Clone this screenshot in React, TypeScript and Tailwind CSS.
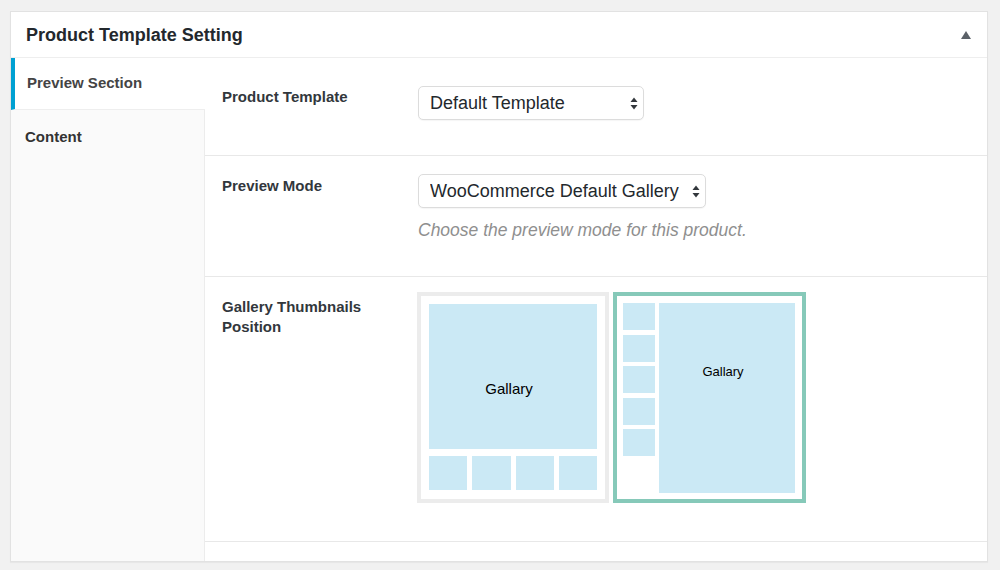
import React, { useState } from "react";

const font = { fontFamily: '"Liberation Sans", Arial, sans-serif' };

function SelectArrows() {
  return (
    <svg width="8" height="13" viewBox="0 0 8 13" className="pointer-events-none absolute right-[6px] top-[11px]">
      <path d="M4 0.5 L7.5 5 L0.5 5 Z" fill="#32373c" />
      <path d="M4 12.5 L7.5 8 L0.5 8 Z" fill="#32373c" />
    </svg>
  );
}

interface FakeSelectProps {
  value: string;
  options: string[];
  width: string;
  onChange: (v: string) => void;
}

function FakeSelect({ value, options, width, onChange }: FakeSelectProps) {
  return (
    <div className={`relative h-[34px] self-start ${width}`}>
      <select
        value={value}
        onChange={(e) => onChange(e.target.value)}
        style={font}
        className="h-[34px] w-full appearance-none rounded-[5px] border border-[#dcdcdc] bg-white pl-[11px] pr-6 text-[18px] text-[#23282d] shadow-[0_1px_1px_rgba(0,0,0,0.04)] outline-none"
      >
        {options.map((o) => (
          <option key={o}>{o}</option>
        ))}
      </select>
      <SelectArrows />
    </div>
  );
}

function BottomThumbs({ active, onClick }: { active: boolean; onClick: () => void }) {
  return (
    <div
      onClick={onClick}
      className={`box-border flex h-[211px] w-[192px] cursor-pointer flex-col border-4 bg-white p-2 ${
        active ? "border-[#86c9b9]" : "border-[#ececec]"
      }`}
    >
      <div className="h-[145px] bg-[#cbe9f5] pr-[8px] pt-[76px] text-center text-[15px] leading-[18px] text-black">Gallary</div>
      <div className="mt-[7px] grid h-[34px] grid-cols-4 gap-[5px]">
        <div className="bg-[#cbe9f5]" />
        <div className="bg-[#cbe9f5]" />
        <div className="bg-[#cbe9f5]" />
        <div className="bg-[#cbe9f5]" />
      </div>
    </div>
  );
}

function LeftThumbs({ active, onClick }: { active: boolean; onClick: () => void }) {
  return (
    <div
      onClick={onClick}
      className={`box-border flex h-[211px] w-[193px] cursor-pointer gap-[4px] border-4 bg-white pb-[6px] pl-[6px] pr-[7px] pt-[7px] ${
        active ? "border-[#86c9b9]" : "border-[#ececec]"
      }`}
    >
      <div className="flex w-[32px] flex-col gap-[4.5px]">
        <div className="h-[27px] bg-[#cbe9f5]" />
        <div className="h-[27px] bg-[#cbe9f5]" />
        <div className="h-[27px] bg-[#cbe9f5]" />
        <div className="h-[27px] bg-[#cbe9f5]" />
        <div className="h-[27px] bg-[#cbe9f5]" />
      </div>
      <div className="flex-1 bg-[#cbe9f5] pr-[8px] pt-[61px] text-center text-[13px] leading-[16px] text-black">Gallary</div>
    </div>
  );
}

export default function App() {
  const [tab, setTab] = useState("preview");
  const [template, setTemplate] = useState("Default Template");
  const [mode, setMode] = useState("WooCommerce Default Gallery");
  const [position, setPosition] = useState("left");

  return (
    <div style={font} className="min-h-[570px] w-[1000px] bg-[#f1f1f1] pl-[10px] pt-[11px]">
      <div className="box-border flex h-[551px] w-[978px] flex-col border border-[#e2e2e2] bg-white shadow-[0_1px_1px_rgba(0,0,0,0.04)]">
        {/* header */}
        <div className="flex h-[46px] shrink-0 items-center justify-between border-b border-[#eeeeee] pl-[15px] pr-[16px] pt-[1px]">
          <h2 className="text-[18px] font-bold text-[#23282d]">Product Template Setting</h2>
          <svg width="10" height="8" viewBox="0 0 10 8">
            <path d="M5 0 L10 8 L0 8 Z" fill="#5b6168" />
          </svg>
        </div>

        <div className="flex flex-1">
          {/* tabs */}
          <div className="w-[194px] shrink-0 border-r border-[#ececec] bg-[#fafafa]">
            <button
              onClick={() => setTab("preview")}
              className={`relative z-10 -mr-px box-border flex h-[52px] w-[calc(100%+1px)] items-center border-b border-[#eeeeee] text-left text-[15px] font-bold ${
                tab === "preview"
                  ? "border-l-4 border-l-[#00a0d2] bg-white pl-[12px] text-[#444]"
                  : "pl-[14px] text-[#333]"
              }`}
            >
              Preview Section
            </button>
            <button
              onClick={() => setTab("content")}
              className={`relative z-10 -mr-px box-border flex h-[55px] w-[calc(100%+1px)] items-center text-left text-[15px] font-bold ${
                tab === "content"
                  ? "border-l-4 border-l-[#00a0d2] bg-white pl-[12px] text-[#444]"
                  : "pl-[14px] text-[#333]"
              }`}
            >
              Content
            </button>
          </div>

          {/* fields */}
          <div className="flex flex-1 flex-col">
            <div className="flex h-[98px] border-b border-[#e8e8e8] pl-[17px] pt-[28px]">
              <div className="w-[196px] pt-[1px] text-[15px] font-bold leading-[20px] text-[#32373c]">Product Template</div>
              <FakeSelect
                value={template}
                onChange={setTemplate}
                width="w-[226px]"
                options={["Default Template", "Full Width Template", "Sidebar Template"]}
              />
            </div>

            <div className="flex h-[121px] border-b border-[#e8e8e8] pl-[17px] pt-[18px]">
              <div className="w-[196px] pt-[2px] text-[15px] font-bold leading-[20px] text-[#32373c]">Preview Mode</div>
              <div>
                <FakeSelect
                  value={mode}
                  onChange={setMode}
                  width="w-[288px]"
                  options={["WooCommerce Default Gallery", "Slider Gallery", "Grid Gallery"]}
                />
                <p className="mt-[10px] text-[17.5px] italic leading-[24px] text-[#8f8f8f]">
                  Choose the preview mode for this product.
                </p>
              </div>
            </div>

            <div className="flex h-[265px] border-b border-[#e8e8e8] pl-[17px] pt-[15px]">
              <div className="w-[195px] pt-[5px] text-[15px] font-bold leading-[20px] text-[#32373c]">
                Gallery Thumbnails
                <br />
                Position
              </div>
              <div className="flex gap-[4px]">
                <BottomThumbs active={position === "bottom"} onClick={() => setPosition("bottom")} />
                <LeftThumbs active={position === "left"} onClick={() => setPosition("left")} />
              </div>
            </div>

            <div className="flex-1" />
          </div>
        </div>
      </div>
    </div>
  );
}
